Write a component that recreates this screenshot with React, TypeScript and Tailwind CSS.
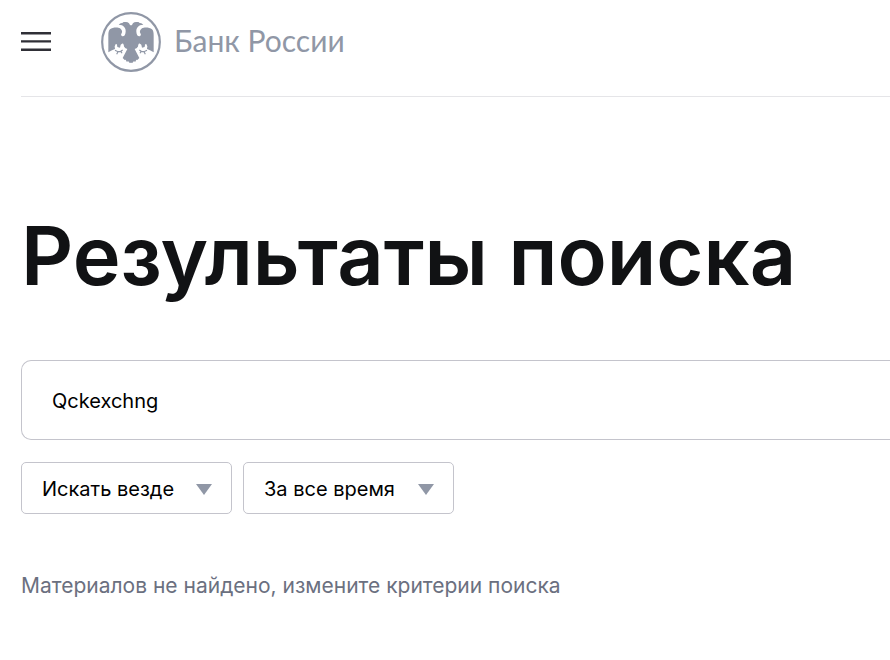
import React, { useState } from 'react';

const places = ['Искать везде', 'В новостях', 'В документах'];
const periods = ['За все время', 'За неделю', 'За месяц', 'За год'];

function EagleHalf() {
  return (
    <>
      <path
        fill="#9097a6"
        d="M124 76 L120 76 C119 70 115 66 108 66 L97 66 L101 68 C94 68 89 70 86 74 L96 76 C104 80 108 87 107 95 C106 104 103 110 97 109 C93 107 92 103 95 100 C98 96 96 89 90 85 C83 81 67 82 60 88 C56 92 55 98 55 106 L55 157 L66 151 L75 147 L74 139 L78 131 L82 141 L90 143 L92 134 L98 130 L101 138 L105 144 L112 147 L98 174 L104 180 L107 179 L110 185 L115 184 L118 188 L124 188 Z"
      />
      <path
        fill="none"
        stroke="#9097a6"
        strokeWidth="3.5"
        d="M98 150 L92 154 L84 155 L75 151 M84 155 L80 163 M92 153 L96 160"
      />
      <path fill="none" stroke="#fff" strokeWidth="4" d="M79 133 L80 146 L88 149 M98 132 L100 141 L104 148" />
    </>
  );
}

function Emblem() {
  return (
    <svg className="size-[60px] shrink-0" viewBox="33 36 180 180" aria-hidden="true">
      <circle cx="123" cy="126" r="86.5" fill="none" stroke="#9097a6" strokeWidth="6.5" />
      <EagleHalf />
      <g transform="translate(246 0) scale(-1 1)">
        <EagleHalf />
      </g>
    </svg>
  );
}

function FilterSelect({ label, options }: { label: string; options: string[] }) {
  return (
    <div className="relative">
      <select
        aria-label={label}
        className="h-[52px] w-[211px] appearance-none rounded-[5px] border border-[#c4c4cc] bg-white pt-[2px] pl-5 pr-10 font-['Inter',sans-serif] text-[20px] text-black"
      >
        {options.map(o => (
          <option key={o}>{o}</option>
        ))}
      </select>
      <svg className="pointer-events-none absolute right-5 top-[22px] h-[11px] w-4" viewBox="0 0 16 11" aria-hidden="true">
        <path d="M0 0H16L8 11Z" fill="#9097a6" />
      </svg>
    </div>
  );
}

export default function App() {
  const [query, setQuery] = useState('Qckexchng');

  return (
    <div className="min-h-screen overflow-hidden bg-white pl-[21px] font-['Inter',sans-serif]">
      <header className="flex items-center border-b border-[#e5e5e8] pt-3 pb-6">
        <button type="button" aria-label="Меню" className="mr-[50px]">
          <svg className="h-5 w-[30px]" viewBox="0 0 30 20" fill="#2f2f36" aria-hidden="true">
            <path d="M0 0H30V2.4H0ZM0 8.2H30V10.6H0ZM0 16.5H30V19H0Z" />
          </svg>
        </button>
        <a href="#" className="flex items-center gap-[13px] font-['Lato',sans-serif] text-[30px] text-[#9097a6]">
          <Emblem />
          <span className="pb-1">Банк России</span>
        </a>
      </header>

      <main className="pt-[109px]">
        <h1 className="whitespace-nowrap text-[81px] leading-[100px] font-semibold text-[#111214]">Результаты поиска</h1>

        <form className="mt-[54px]" onSubmit={e => e.preventDefault()}>
          <input
            type="text"
            aria-label="Поиск"
            value={query}
            onChange={e => setQuery(e.target.value)}
            className="h-20 w-full rounded-l-[10px] border border-r-0 border-[#c4c4cc] px-[30px] pt-[2px] text-[20px] text-black"
          />
          <div className="mt-[22px] flex gap-[11px]">
            <FilterSelect label="Раздел" options={places} />
            <FilterSelect label="Период" options={periods} />
          </div>
        </form>

        <p className="mt-14 text-[21px] leading-8 text-[#6b7080]">Материалов не найдено, измените критерии поиска</p>
      </main>
    </div>
  );
}
